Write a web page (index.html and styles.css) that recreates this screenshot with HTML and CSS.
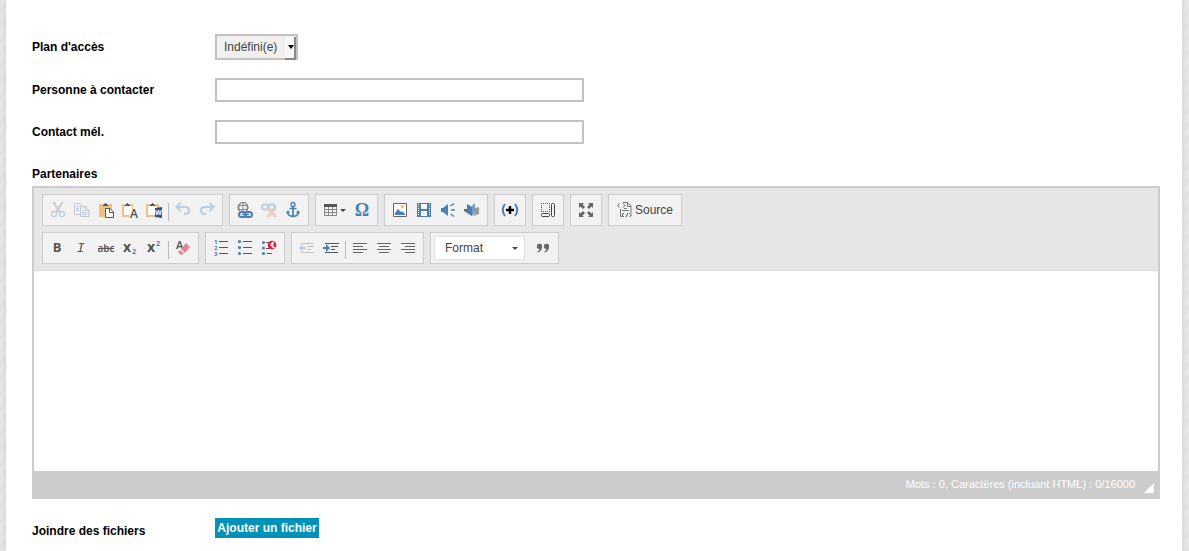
FILE: index.html
```html
<!DOCTYPE html>
<html lang="fr">
<head>
  <meta charset="UTF-8" />
  <meta name="viewport" content="width=device-width, initial-scale=1.0" />
  <title>Partenaires</title>
  <link rel="stylesheet" href="styles.css">
</head>
<body>
  <form class="page">
    <div class="field">
      <label for="plan">Plan d'accès</label>
      <div class="select">
        <select id="plan">
          <option>Indéfini(e)</option>
        </select>
      </div>
    </div>
    <div class="field">
      <label for="personne">Personne à contacter</label>
      <input type="text" id="personne" />
    </div>
    <div class="field">
      <label for="mel">Contact mél.</label>
      <input type="text" id="mel" />
    </div>

    <label class="editor-label" for="partenaires">Partenaires</label>
    <div class="editor">
      <div class="toolbar">
        <div class="toolbar-row">
          <div class="group">
            <button type="button" class="tool disabled" title="Couper">
              <svg viewBox="0 0 16 16"><path d="M3.500 0l6 10M12.500 0l-6 10" stroke="#747474" stroke-width="2"/><circle cx="4" cy="12" r="2.500" stroke="#4a7fb5" stroke-width="1.300"/><circle cx="12" cy="12" r="2.500" stroke="#4a7fb5" stroke-width="1.300"/></svg>
            </button>
            <button type="button" class="tool disabled" title="Copier">
              <svg viewBox="0 0 16 16"><path d="M6 12.500H.5v-11H6L8.500 4" stroke="#666"/><path d="M6.500 4.500h5l3.500 3.500v6.500h-8.500zM11.500 4.500v4h3" stroke="#666"/><path d="M2 4.500h3M2 6.500h3M2 8.500h3M8 8.500h2M8 10.500h5M8 12.500h5" stroke="#4a7fb5"/></svg>
            </button>
            <button type="button" class="tool" title="Coller">
              <svg viewBox="0 0 16 16"><path d="M1 2h13v13H1z" fill="#eac282"/><path d="M4 1h7v3H4z" fill="#f2f2f2"/><path d="M4.500 3.500h6M5.500 2.500h4M7 1.500h1" stroke="#555"/><path d="M7.500 6.500h4.500l3.500 3.500v5.500h-8z" fill="#fff" stroke="#555"/><path d="M11.500 6.500v4h4" stroke="#555"/></svg>
            </button>
            <button type="button" class="tool" title="Coller comme texte sans mise en forme">
              <svg viewBox="0 0 16 16"><path d="M0 2h11v13H0z" fill="#eac282"/><path d="M2 4h8v9H2z" fill="#fff"/><path d="M2 1h7v3H2z" fill="#f2f2f2"/><path d="M2.500 3.500h6M3.500 2.500h4M5 1.500h1" stroke="#555"/><path d="M9 7h2v9H7z" fill="#f2f2f2"/><text x="8" y="16" font-size="12" class="glyph thin">A</text></svg>
            </button>
            <button type="button" class="tool" title="Coller depuis Word">
              <svg viewBox="0 0 16 16"><path d="M0 2h13v13H0z" fill="#eac282"/><path d="M2 4h9v9H2z" fill="#fff"/><path d="M3 1h7v3H3z" fill="#f2f2f2"/><path d="M3.500 3.500h6M4.500 2.500h4M6 1.500h1" stroke="#555"/><path d="M9 6l7-1v11l-7-1z" fill="#295391"/><text x="9" y="13" font-size="7" class="glyph light">W</text></svg>
            </button>
            <span class="separator"></span>
            <button type="button" class="tool disabled" title="Annuler">
              <svg viewBox="0 0 16 16"><path d="M5.500 1L1.500 5l4 4M2 5h8c6 0 5 7 0 7H9" stroke="#4a7fb5" stroke-width="2.200"/></svg>
            </button>
            <button type="button" class="tool disabled" title="Rétablir">
              <svg viewBox="0 0 16 16"><path d="M10.500 1l4 4-4 4M14 5H6c-6 0-5 7 0 7h1" stroke="#4a7fb5" stroke-width="2.200"/></svg>
            </button>
          </div>
          <div class="group">
            <button type="button" class="tool" title="Lien">
              <svg viewBox="0 0 16 16"><circle cx="6" cy="5.500" r="5" stroke="#666"/><path d="M6 0v10M1 3.500h10M1 7.500h10M3.500 1c-2 3-2 6 0 9M8.500 1c2 3 2 6 0 9" stroke="#777" stroke-width=".8"/><path d="M1 9h15v7H1z" fill="#f2f2f2"/><rect x="2" y="10" width="7" height="5" rx="2.500" stroke="#4a7fb5" stroke-width="2"/><rect x="8" y="10" width="7" height="5" rx="2.500" stroke="#4a7fb5" stroke-width="2"/><path d="M5 12.500h7" stroke="#4a7fb5" stroke-width="1.500"/></svg>
            </button>
            <button type="button" class="tool disabled" title="Supprimer le lien">
              <svg viewBox="0 0 16 16"><rect x="1" y="2.500" width="7" height="5" rx="2.500" stroke="#4a7fb5" stroke-width="2"/><rect x="7" y="2.500" width="7" height="5" rx="2.500" stroke="#4a7fb5" stroke-width="2"/><path d="M6.500 6.500l8.500 8.500M15 6.500L6.500 15" stroke="#e2694a" stroke-width="2.200"/></svg>
            </button>
            <button type="button" class="tool" title="Ancre">
              <svg viewBox="0 0 16 16"><circle cx="8" cy="2.500" r="2" stroke="#4a7fb5" stroke-width="1.300"/><path d="M8 5v9M4.500 6.500h7M2.500 10c0 3 2 4 5.500 4.500 3.500-.5 5.500-1.500 5.500-4.500" stroke="#4a7fb5" stroke-width="1.700"/><path d="M1 11l2-3 2 3zM11 11l2-3 2 3z" fill="#4a7fb5"/></svg>
            </button>
          </div>
          <div class="group">
            <button type="button" class="tool with-arrow" title="Tableau">
              <svg viewBox="0 0 16 16"><path d="M1.500 2.500h12v11h-12zM1 7.500h13M1 10.500h13M5.500 4v10M9.500 4v10" stroke="#888"/><path d="M1 2h13v3H1z" fill="#555"/></svg>
              <span class="arrow"></span>
            </button>
            <button type="button" class="tool" title="Insérer un caractère spécial">
              <svg viewBox="0 0 16 16"><text x="8" y="14" font-size="18" text-anchor="middle" class="glyph blue serif">Ω</text></svg>
            </button>
          </div>
          <div class="group">
            <button type="button" class="tool" title="Image">
              <svg viewBox="0 0 16 16"><path d="M1.500 1.500h13v13h-13z" fill="#fff" stroke="#666"/><path d="M3 13v-2l3-4 3 3 1-1 3 3v1z" fill="#4a7fb5"/><circle cx="10.500" cy="4.500" r="1.700" fill="#f0c27b"/></svg>
            </button>
            <button type="button" class="tool" title="Vidéo">
              <svg viewBox="0 0 16 16"><path d="M1 1h14v14H1z" fill="#4a7fb5"/><path d="M5 2h6v5H5zM5 9h6v5H5z" fill="#fff"/><path d="M2.500 2v12M13.500 2v12" stroke="#fff" stroke-dasharray="1 1"/></svg>
            </button>
            <button type="button" class="tool" title="Son">
              <svg viewBox="0 0 16 16"><path d="M1 6h2l5-4v12l-5-4H1z" fill="#4a7fb5"/><path d="M10.500 4l3.500-2.500M11 8h4M10.500 12l3.500 2.500" stroke="#4a7fb5" stroke-width="1.400"/></svg>
            </button>
            <button type="button" class="tool" title="Document">
              <svg viewBox="0 0 16 16"><path d="M0 7h3l5 5v2l-8-5z" fill="#666"/><path d="M3 2l5 3v9l-5-4z" fill="#4a7fb5"/><path d="M8 4l3-3v9l-3 4z" fill="#769dc5"/><path d="M11 6l4-1v7l-6 2v-1l2-2z" fill="#999"/></svg>
            </button>
          </div>
          <div class="group">
            <button type="button" class="tool" title="Insérer">
              <svg viewBox="0 0 16 16"><path d="M3 2c-3 4-3 8 0 12M13 2c3 4 3 8 0 12" stroke="#4a7fb5" stroke-width="2"/><path d="M8 4v8M4 8h8" stroke="#000" stroke-width="2.400"/></svg>
            </button>
          </div>
          <div class="group">
            <button type="button" class="tool" title="Afficher les blocs">
              <svg viewBox="0 0 16 16"><path d="M1.500 1v9M9.500 1v9M1 1.500h9M1 9.500h9" stroke="#555" stroke-dasharray="1 1"/><rect x="1.500" y="11.500" width="8" height="3" rx="1" stroke="#444"/><rect x="11.500" y="1.500" width="3" height="13" rx="1" stroke="#444"/></svg>
            </button>
          </div>
          <div class="group">
            <button type="button" class="tool" title="Agrandir">
              <svg viewBox="0 0 16 16"><path d="M1 1h5L4.500 2.500 7 5 5 7 2.500 4.500 1 6zM15 1v5l-1.500-1.500L11 7 9 5l2.500-2.500L10 1zM1 15v-5l1.500 1.500L5 9l2 2-2.500 2.500L6 15zM15 15h-5l1.500-1.500L9 11l2-2 2.500 2.500L15 10z" fill="#666"/></svg>
            </button>
          </div>
          <div class="group">
            <button type="button" class="tool source">
              <svg viewBox="0 0 16 16"><path d="M6 .5h4.500l3.500 3.500v7M10.500 .5v4H14M3.500 7v7.500h2M7 6.500h3M5 8.500h7" stroke="#777"/><path d="M2.500 1.500L.5 3.500l2 2M6 1.500l2 2-2 2M7 11l-2 2 2 2M12.500 11l2 2-2 2M11 11l-2 4" stroke="#555"/></svg>
              <span>Source</span>
            </button>
          </div>
        </div>

        <div class="toolbar-row">
          <div class="group">
            <button type="button" class="tool" title="Gras">
              <svg viewBox="0 0 16 16"><text x="7" y="12" font-size="13" text-anchor="middle" class="glyph">B</text></svg>
            </button>
            <button type="button" class="tool" title="Italique">
              <svg viewBox="0 0 16 16"><text x="7" y="12" font-size="13" text-anchor="middle" class="glyph mono">I</text></svg>
            </button>
            <button type="button" class="tool" title="Barré">
              <svg viewBox="0 0 16 16"><text x="8" y="12" font-size="10" text-anchor="middle" class="glyph thin">abc</text><path d="M0 8.500h16" stroke="#555"/></svg>
            </button>
            <button type="button" class="tool" title="Indice">
              <svg viewBox="0 0 16 16"><text x="1" y="12" font-size="14" class="glyph">x</text><text x="10" y="14" font-size="7" class="glyph blue">2</text></svg>
            </button>
            <button type="button" class="tool" title="Exposant">
              <svg viewBox="0 0 16 16"><text x="1" y="12" font-size="14" class="glyph">x</text><text x="10" y="6" font-size="7" class="glyph blue">2</text></svg>
            </button>
            <span class="separator"></span>
            <button type="button" class="tool" title="Supprimer la mise en forme">
              <svg viewBox="0 0 16 16"><text x="1" y="9" font-size="11" class="glyph thin">A</text><path d="M6 9l5-6 4 4-5 6z" fill="#e98195"/><path d="M5 10l4 4-3 1-3-3z" fill="#e98195"/></svg>
            </button>
          </div>
          <div class="group">
            <button type="button" class="tool" title="Liste numérotée">
              <svg viewBox="0 0 16 16"><path d="M6 1.500h9M6 7.500h9M6 13.500h9" stroke="#555"/><text x="1" y="4" font-size="6" class="glyph blue">1</text><text x="1" y="10" font-size="6" class="glyph blue">2</text><text x="1" y="16" font-size="6" class="glyph blue">3</text></svg>
            </button>
            <button type="button" class="tool" title="Liste à puces">
              <svg viewBox="0 0 16 16"><path d="M6 1.500h9M6 7.500h9M6 13.500h9" stroke="#555"/><circle cx="2.500" cy="1.500" r="1.600" fill="#4a7fb5"/><circle cx="2.500" cy="7.500" r="1.600" fill="#4a7fb5"/><circle cx="2.500" cy="13.500" r="1.600" fill="#4a7fb5"/></svg>
            </button>
            <button type="button" class="tool" title="Liste personnalisée">
              <svg viewBox="0 0 16 16"><path d="M5 2.500h4M5 8.500h4M6 13.500h5" stroke="#555"/><circle cx="2.500" cy="2.500" r="1.600" fill="#4a7fb5"/><circle cx="2.500" cy="8" r="1.600" fill="#4a7fb5"/><circle cx="2.500" cy="13.500" r="1.600" fill="#4a7fb5"/><circle cx="11" cy="5" r="4.300" fill="#e8193c"/><path d="M12.500 2c-4 1-3 5 1 6-2-2-2-3-1-6z" fill="#fff" stroke="#fff"/></svg>
            </button>
          </div>
          <div class="group">
            <button type="button" class="tool disabled" title="Diminuer le retrait">
              <svg viewBox="0 0 16 16"><path d="M2 3.500h13M8 6.500h7M8 9.500h4M2 12.500h13" stroke="#555"/><path d="M0 8l4-4v3h3v2H4v3z" fill="#4a7fb5"/></svg>
            </button>
            <button type="button" class="tool" title="Augmenter le retrait">
              <svg viewBox="0 0 16 16"><path d="M2 3.500h14M8 6.500h7M8 9.500h4M2 12.500h13" stroke="#555"/><path d="M7 8L3 4v3H0v2h3v3z" fill="#4a7fb5"/></svg>
            </button>
            <span class="separator"></span>
            <button type="button" class="tool" title="Aligner à gauche">
              <svg viewBox="0 0 16 16"><path d="M1 3.500h14M1 6.500h10M1 9.500h14M1 12.500h10" stroke="#666"/></svg>
            </button>
            <button type="button" class="tool" title="Centrer">
              <svg viewBox="0 0 16 16"><path d="M1 3.500h14M3 6.500h10M1 9.500h14M3 12.500h10" stroke="#666"/></svg>
            </button>
            <button type="button" class="tool" title="Aligner à droite">
              <svg viewBox="0 0 16 16"><path d="M1 3.500h14M5 6.500h10M1 9.500h14M5 12.500h10" stroke="#666"/></svg>
            </button>
          </div>
          <div class="group">
            <button type="button" class="format">
              <span>Format</span>
              <span class="arrow"></span>
            </button>
            <button type="button" class="tool" title="Citation">
              <svg viewBox="0 0 16 16"><path d="M7 7c0 3-2 5-4.500 5.500v-1.200c1.500-.7 2-1.500 2-2.300a2.600 2.600 0 1 1 2.500-2zM14 7c0 3-2 5-4.500 5.500v-1.200c1.500-.7 2-1.500 2-2.300a2.600 2.600 0 1 1 2.500-2z" fill="#666"/></svg>
            </button>
          </div>
        </div>
      </div>
      <textarea id="partenaires"></textarea>
      <div class="editor-footer">
        <span>Mots : 0, Caractères (incluant HTML) : 0/16000</span>
        <span class="resizer"></span>
      </div>
    </div>

    <div class="field files">
      <label for="ajouter">Joindre des fichiers</label>
      <button type="button" id="ajouter" class="add-file">Ajouter un fichier</button>
    </div>
  </form>
</body>
</html>
```
FILE: styles.css
```css
:root {
  --border: #ccc;
  --blue: #4a7fb5;
  --icon: #555;
}

* {
  box-sizing: border-box;
}

body {
  margin: 0;
  padding: 0 7px 0 6px;
  font-family: "Liberation Sans", Arial, sans-serif;
  font-size: 12px;
  color: #000;
  background: repeating-linear-gradient(135deg, #e6e6e6 0 5px, #e3e3e3 5px 10px);
}

button,
input,
select,
textarea {
  font-family: inherit;
  font-size: 12px;
}

.page {
  min-height: 100vh;
  padding: 34px 22px 13px 26px;
  background: #fff;
  box-shadow: 0 0 5px #ccc;
}

.field {
  display: flex;
  align-items: center;
  margin-bottom: 18px;
}

label {
  width: 183px;
  font-weight: bold;
  line-height: 14px;
}

.field input {
  width: 369px;
  height: 24px;
  padding: 2px 4px;
  border: 2px solid #c2c2c2;
  background: #fff;
}

.select {
  position: relative;
}

.select select {
  display: block;
  width: 83px;
  height: 26px;
  padding: 0 0 0 7px;
  border: 2px solid #c2c2c2;
  border-radius: 0;
  appearance: none;
  background: #f1f0ef;
  color: #444;
}

/* Bouton en relief de la liste */
.select::before {
  content: "";
  position: absolute;
  top: 3px;
  right: 2px;
  width: 9px;
  height: 21px;
  border: solid #888;
  border-width: 0 2px 2px 0;
  background: #f6f6f6;
  pointer-events: none;
}

.select::after {
  content: "";
  position: absolute;
  top: 11px;
  right: 4px;
  border: 3px solid transparent;
  border-top: 4px solid #000;
  border-bottom: 0;
  pointer-events: none;
}

.editor-label {
  display: block;
  margin-top: 23px;
  margin-bottom: 5px;
}

.editor {
  border: 2px solid var(--border);
}

.toolbar {
  display: flex;
  flex-direction: column;
  gap: 6px;
  padding: 6px 8px;
  background: #e6e6e6;
  border-bottom: 1px solid #ddd;
}

.toolbar-row {
  display: flex;
  flex-wrap: wrap;
  gap: 6px;
}

.group {
  display: flex;
  align-items: center;
  padding: 3px;
  border: 1px solid var(--border);
  background: #f2f2f2;
}

.tool {
  display: flex;
  align-items: center;
  justify-content: center;
  width: 24px;
  height: 24px;
  padding: 0;
  border: none;
  background: none;
  color: #444;
  cursor: pointer;
}

.tool svg {
  flex: none;
  width: 16px;
  height: 16px;
  fill: none;
  overflow: visible;
}

.tool.disabled {
  cursor: default;
}

.tool.disabled svg {
  opacity: 0.3;
}

.with-arrow {
  width: 31px;
  gap: 1px;
}

.source {
  width: 66px;
  gap: 2px;
}

.arrow {
  border: 3px solid transparent;
  border-top-color: #444;
  border-bottom: 0;
}

.separator {
  align-self: flex-end;
  width: 1px;
  height: 18px;
  margin: 0 2px 1px;
  background: #bbb;
}

.glyph {
  font-family: "Open Sans", sans-serif;
  font-weight: bold;
  fill: var(--icon);
}

.thin {
  font-weight: 600;
}

.blue {
  fill: var(--blue);
}

.light {
  fill: #fff;
}

.serif {
  font-family: "Liberation Serif", serif;
}

.mono {
  font-family: "DejaVu Sans Mono", monospace;
  font-style: italic;
  font-weight: normal;
}

.format {
  display: flex;
  align-items: center;
  justify-content: space-between;
  width: 91px;
  height: 24px;
  margin-right: 6px;
  padding: 0 6px 0 10px;
  border: 1px solid #e2e2e2;
  background: #fff;
  color: #444;
  cursor: pointer;
}

.editor textarea {
  display: block;
  width: 100%;
  height: 200px;
  padding: 8px;
  border: none;
  outline: none;
  resize: none;
}

.editor-footer {
  display: flex;
  align-items: center;
  justify-content: flex-end;
  gap: 9px;
  height: 26px;
  padding-right: 4px;
  background: var(--border);
  color: #fff;
  font-size: 11px;
}

.resizer {
  align-self: flex-end;
  margin-bottom: 4px;
  border: 5px solid #fff;
  border-top-color: transparent;
  border-left-color: transparent;
}

.files {
  align-items: flex-end;
  margin-top: 19px;
  margin-bottom: 0;
}

.add-file {
  width: 104px;
  height: 20px;
  padding: 0;
  border: none;
  background: #0092b8;
  color: #fff;
  font-weight: bold;
  cursor: pointer;
}
```
